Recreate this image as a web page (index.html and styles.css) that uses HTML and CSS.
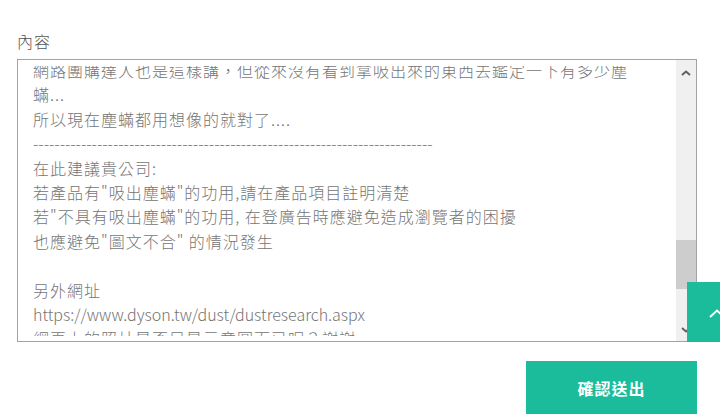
FILE: index.html
```html
<!DOCTYPE html>
<html lang="zh-Hant">
<head>
<meta charset="utf-8">
<title>內容</title>
<link rel="stylesheet" href="styles.css">
</head>
<body>
<form class="form">
  <div class="label">內容</div>
  <div class="field">
    <div class="pane">
      <div class="clip">
        <div class="text">網路團購達人也是這樣講，但從來沒有看到拿吸出來的東西去鑑定一下有多少塵蟎...
所以現在塵蟎都用想像的就對了....
<span class="lat">---------------------------------------------------------------------------</span>
在此建議貴公司:
若產品有"吸出塵蟎"的功用,請在產品項目註明清楚
若"不具有吸出塵蟎"的功用, 在登廣告時應避免造成瀏覽者的困擾
也應避免"圖文不合" 的情況發生

另外網址
<span class="lat">https://www.dyson.tw/dust/dustresearch.aspx</span>
網頁上的照片是否只是示意圖而已呢？謝謝</div>
      </div>
    </div>
    <div class="scrollbar">
      <div class="sb-btn sb-up">
        <svg width="10" height="6" viewBox="0 0 10 6"><polyline points="1,5 5,1.5 9,5" fill="none" stroke="#606060" stroke-width="2"/></svg>
      </div>
      <div class="sb-track"><div class="sb-thumb"></div></div>
      <div class="sb-btn sb-down">
        <svg width="10" height="6" viewBox="0 0 10 6"><polyline points="1,1 5,4.5 9,1" fill="none" stroke="#606060" stroke-width="2"/></svg>
      </div>
    </div>
  </div>
  <div class="actions">
    <button type="button" class="submit">確認送出</button>
  </div>
</form>
<a class="to-top" href="#">
  <svg width="16" height="9" viewBox="0 0 16 9"><polyline points="1,8 8,1.5 15,8" fill="none" stroke="#ffffff" stroke-width="2"/></svg>
</a>
</body>
</html>
```
FILE: styles.css
```css
html, body {
  margin: 0;
  padding: 0;
  background: #ffffff;
}
body {
  font-family: "Noto Sans CJK TC", "Noto Sans", sans-serif;
  font-size: 16px;
  overflow: hidden;
}
.form {
  padding: 29px 23px 0 17px;
}
.label {
  color: #555555;
  font-weight: 300;
  line-height: 24px;
  letter-spacing: 1px;
  margin-bottom: 6px;
}
.field {
  box-sizing: border-box;
  height: 283px;
  border: 1px solid #a3a3a3;
  display: flex;
  background: #ffffff;
}
.pane {
  flex: 1;
  display: flex;
  flex-direction: column;
  padding: 6px 24px 5px 15px;
  min-width: 0;
}
.clip {
  flex: 1;
  overflow: hidden;
}
.text {
  margin-top: -8px;
  white-space: pre-wrap;
  color: #757575;
  font-weight: 300;
  line-height: 24.4px;
  letter-spacing: 1px;
}
.lat {
  letter-spacing: 0;
}
.scrollbar {
  width: 20px;
  background: #f0f0f0;
  display: flex;
  flex-direction: column;
}
.sb-btn {
  display: flex;
  justify-content: center;
  align-items: center;
}
.sb-up {
  height: 26px;
}
.sb-track {
  flex: 1;
}
.sb-thumb {
  margin-top: 154px;
  height: 49px;
  background: #cdcdcd;
}
.sb-down {
  height: 22px;
}
.actions {
  display: flex;
  justify-content: flex-end;
  margin-top: 19px;
}
.submit {
  width: 171px;
  height: 54px;
  border: 0;
  background: #1abc9c;
  color: #ffffff;
  font-family: "Noto Sans CJK TC", "Noto Sans", sans-serif;
  font-size: 16px;
  font-weight: bold;
  letter-spacing: 1px;
  padding: 0;
}
.to-top {
  position: fixed;
  left: 687px;
  top: 282px;
  width: 60px;
  height: 60px;
  background: #1abc9c;
  display: flex;
  justify-content: center;
  align-items: center;
  padding-top: 3px;
  box-sizing: border-box;
}
```
